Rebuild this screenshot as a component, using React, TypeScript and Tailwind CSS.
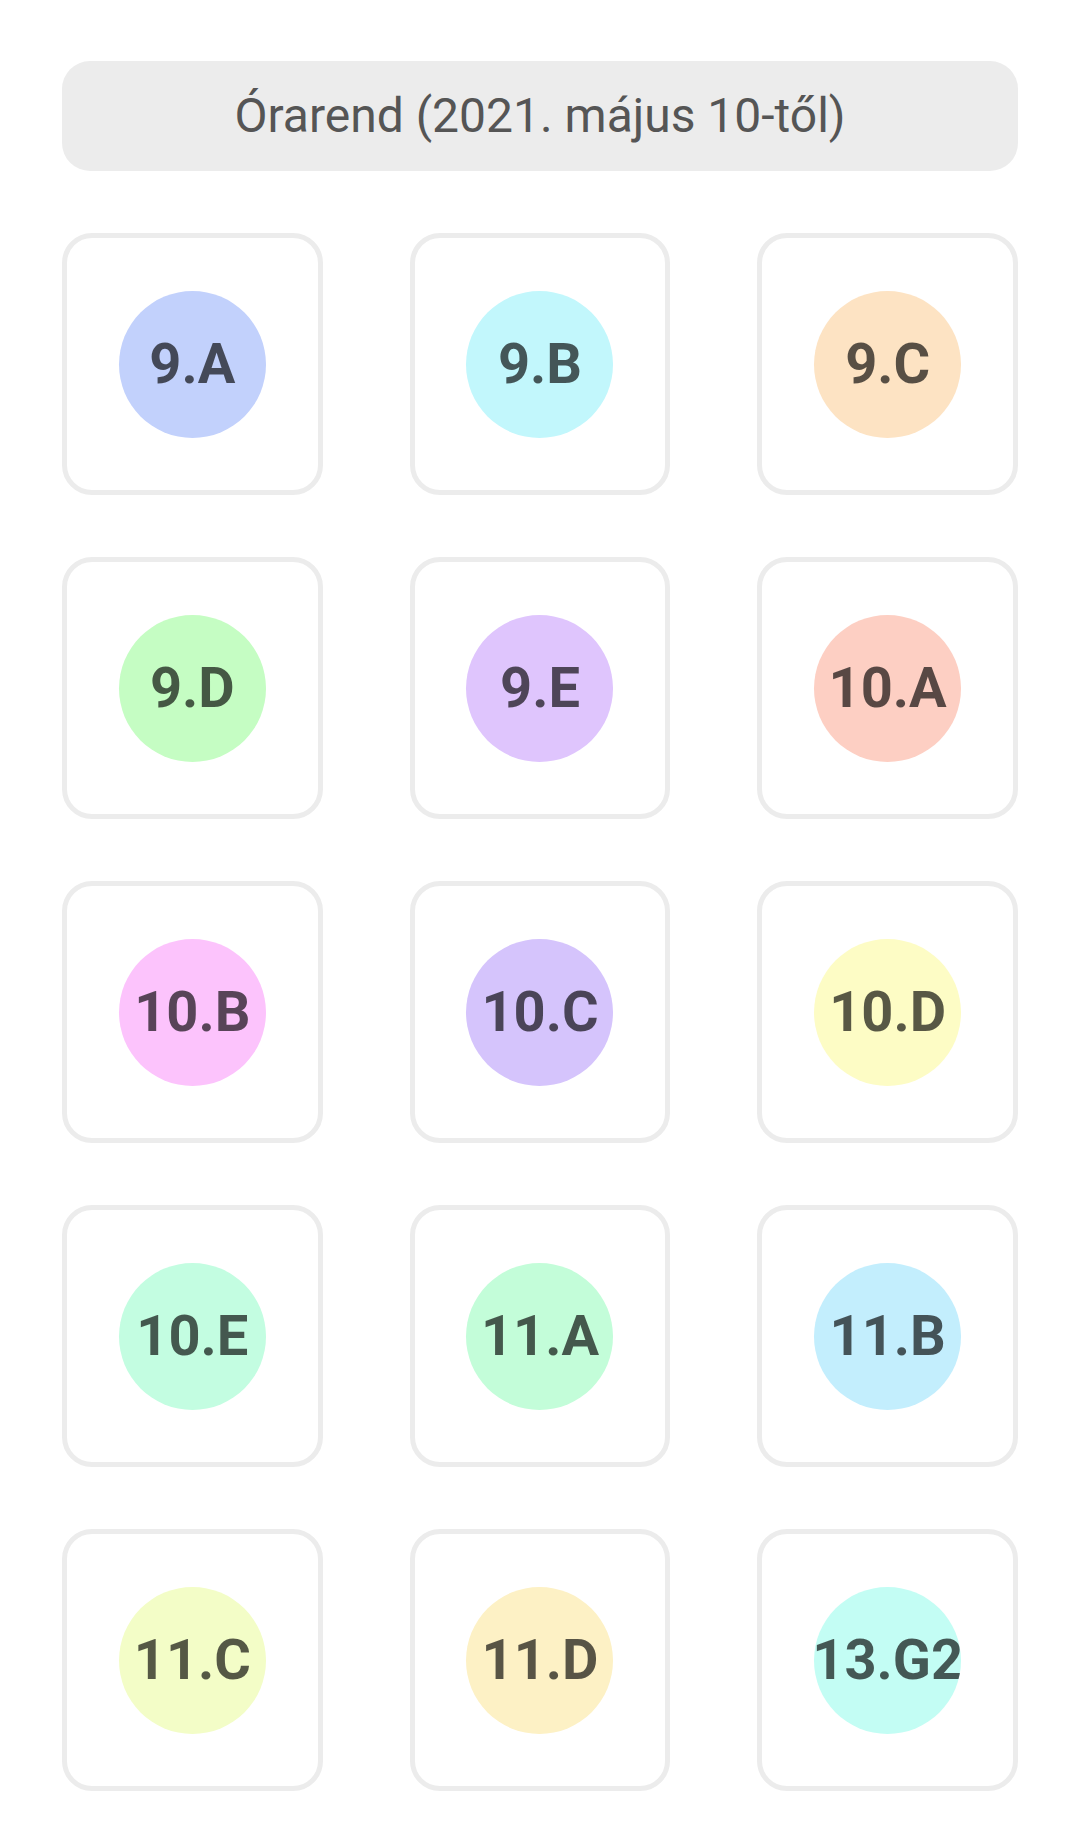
import React from "react";

const classes: { name: string; bg: string }[] = [
  { name: "9.A", bg: "bg-[#c2d1fc]" },
  { name: "9.B", bg: "bg-[#c2f7fc]" },
  { name: "9.C", bg: "bg-[#fde3c3]" },
  { name: "9.D", bg: "bg-[#c5fdc3]" },
  { name: "9.E", bg: "bg-[#dfc5fd]" },
  { name: "10.A", bg: "bg-[#fdcfc3]" },
  { name: "10.B", bg: "bg-[#fcc3fc]" },
  { name: "10.C", bg: "bg-[#d5c4fc]" },
  { name: "10.D", bg: "bg-[#fdfcc5]" },
  { name: "10.E", bg: "bg-[#c3fde1]" },
  { name: "11.A", bg: "bg-[#c3fdd9]" },
  { name: "11.B", bg: "bg-[#c3eefd]" },
  { name: "11.C", bg: "bg-[#f3fdc7]" },
  { name: "11.D", bg: "bg-[#fdf1c5]" },
  { name: "13.G2", bg: "bg-[#c3fdf4]" },
];

export default function App() {
  return (
    <div
      className="min-h-[1848px] w-[1080px] bg-white px-[62px] pt-[61px]"
      style={{ fontFamily: "Roboto, 'Noto Sans', sans-serif" }}
    >
      <div className="flex h-[110px] items-center justify-center rounded-[28px] bg-[#ececec] text-[48px] text-[#555555]">
        Órarend (2021. május 10-től)
      </div>
      <div className="mt-[62px] grid grid-cols-3 gap-x-[87px] gap-y-[62px]">
        {classes.map((c) => (
          <div
            key={c.name}
            className="flex h-[262px] items-center justify-center rounded-[30px] border-[5px] border-[#ececec] bg-white"
          >
            <div
              className={`flex h-[147px] w-[147px] items-center justify-center overflow-hidden whitespace-nowrap rounded-full ${c.bg}`}
            >
              <span className="text-[56px] font-bold leading-none text-black/65">
                {c.name}
              </span>
            </div>
          </div>
        ))}
      </div>
    </div>
  );
}
